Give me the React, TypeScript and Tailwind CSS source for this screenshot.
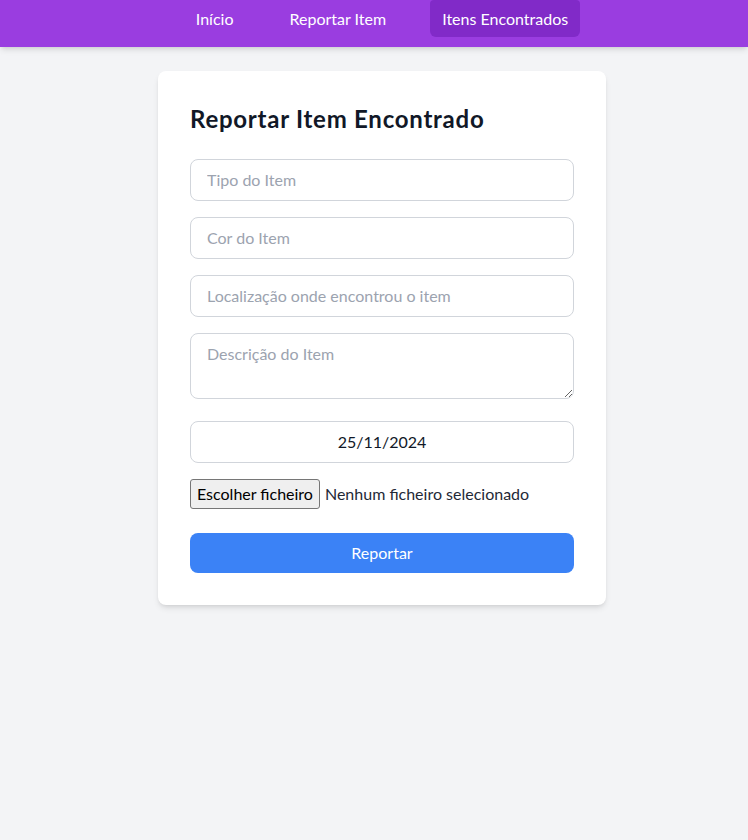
const font = { fontFamily: 'Lato, "Noto Sans", sans-serif' };

function Navbar() {
  const links = ["Início", "Reportar Item", "Itens Encontrados"];
  return (
    <nav className="h-[47px] bg-[#9a3de0] shadow-md pl-4">
      <ul className="flex justify-center gap-8">
        {links.map((l, i) => (
          <li
            key={l}
            className={`h-[37px] px-3 flex items-center rounded-b-md rounded-t-sm text-white ${
              i === 2 ? "bg-[#812ac8]" : ""
            }`}
          >
            {l}
          </li>
        ))}
      </ul>
    </nav>
  );
}

function Field({ placeholder }: { placeholder: string }) {
  return (
    <input
      type="text"
      placeholder={placeholder}
      className="w-full h-[42px] mb-4 px-4 pb-px border border-[#d1d5db] rounded-lg placeholder:text-[#9ca3af] outline-none"
    />
  );
}

export default function App() {
  return (
    <div className="bg-[#f3f4f6] min-h-[840px] text-[#111827]" style={font}>
      <Navbar />
      <main className="flex justify-center pt-6 pl-4">
        <form className="w-[448px] bg-white rounded-lg shadow-md p-8">
          <h1 className="text-2xl font-bold tracking-[0.75px] mb-6 leading-8">
            Reportar Item Encontrado
          </h1>
          <Field placeholder="Tipo do Item" />
          <Field placeholder="Cor do Item" />
          <Field placeholder="Localização onde encontrou o item" />
          <textarea
            placeholder="Descrição do Item"
            className="block w-full h-[66px] mb-[22px] px-4 py-2 border border-[#d1d5db] rounded-lg placeholder:text-[#9ca3af] outline-none"
          />
          <input
            type="text"
            defaultValue="25/11/2024"
            className="w-full h-[42px] mb-4 px-4 pb-px border border-[#d1d5db] rounded-lg text-center outline-none"
          />
          <div className="flex items-center h-[30px] mb-6">
            <span className="h-[30px] px-1.5 flex items-center bg-[#efefef] border border-[#767676] rounded-[3px] text-black">
              Escolher ficheiro
            </span>
            <span className="ml-[5px] text-[#1f2937]">Nenhum ficheiro selecionado</span>
          </div>
          <button
            type="button"
            className="w-full h-10 bg-[#3b82f6] text-white rounded-lg"
          >
            Reportar
          </button>
        </form>
      </main>
    </div>
  );
}
